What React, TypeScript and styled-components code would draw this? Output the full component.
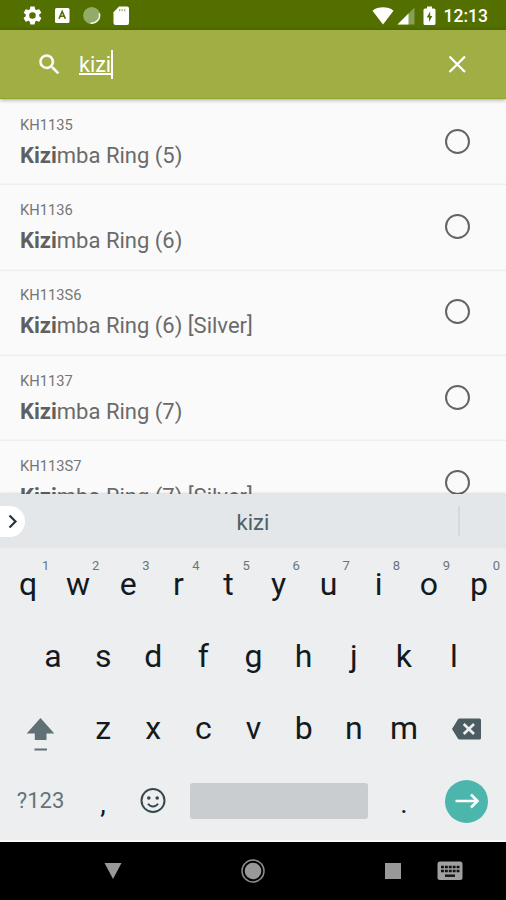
import React from 'react';
import styled, { createGlobalStyle } from 'styled-components';

const GlobalStyle = createGlobalStyle`
  body { margin: 0; background: #000; }
  * { box-sizing: border-box; }
`;

const Screen = styled.div`
  width: 506px;
  height: 900px;
  display: flex;
  flex-direction: column;
  overflow: hidden;
  font-family: Roboto, 'Liberation Sans', sans-serif;
  background: #fafafa;
`;

const StatusBar = styled.header`
  height: 30px;
  flex: none;
  display: flex;
  align-items: center;
  justify-content: space-between;
  padding: 1px 18px 0 22px;
  background: #526f00;
  color: #fff;
`;

const StatusGroup = styled.div<{ $gap: number }>`
  display: flex;
  align-items: center;
  gap: ${(p) => p.$gap}px;
`;

const Clock = styled.span`
  font-size: 17.5px;
  font-weight: 500;
  line-height: 28px;
`;

const SearchBar = styled.div`
  height: 69px;
  flex: none;
  display: flex;
  align-items: center;
  padding: 0 37px 0 36px;
  background: #a0ae44;
  border-bottom: 1px solid #93a42c;
  box-shadow: 0 1px 4px rgba(0, 0, 0, 0.35);
  z-index: 1;
  color: #fff;
`;

const Query = styled.div`
  display: flex;
  align-items: center;
  flex: 1;
  margin-left: 16px;
`;

const QueryText = styled.span`
  font-size: 21.5px;
  line-height: 28px;
  height: 26px;
  text-decoration: underline;
  text-decoration-thickness: 2px;
  text-underline-offset: 1px;
  text-decoration-skip-ink: none;
`;

const Caret = styled.span`
  width: 2px;
  height: 29px;
  background: #fff;
`;

const List = styled.main`
  height: 395px;
  flex: none;
  overflow: hidden;
`;

const Row = styled.div`
  height: 85.3px;
  display: flex;
  justify-content: space-between;
  align-items: center;
  padding: 0 36.5px 0 20px;
  box-shadow: 0 1px 0 #eee, 0 -1px 0 #f5f5f5;
`;

const RowText = styled.div`
  display: flex;
  flex-direction: column;
  gap: 9px;
  padding-top: 1px;
`;

const Code = styled.span`
  font-size: 14.7px;
  line-height: 18px;
  color: #757575;
`;

const Title = styled.span`
  font-size: 22px;
  line-height: 26px;
  color: #6a6a6a;
  white-space: nowrap;

  b { font-weight: 700; color: #606060; }
`;

const Radio = styled.span`
  width: 25px;
  height: 25px;
  margin-bottom: 1px;
  border: 2px solid #646464;
  border-radius: 50%;
`;

const Suggestions = styled.div`
  height: 54px;
  flex: none;
  display: grid;
  grid-template-columns: 46px 1fr 46px;
  align-items: center;
  background: #e4e7e9;
  box-shadow: 0 -1px 2px rgba(0, 0, 0, 0.12);
  z-index: 1;
`;

const Expand = styled.div`
  width: 25px;
  height: 31px;
  border-radius: 0 16px 16px 0;
  background: #fff;
  display: flex;
  align-items: center;
  padding-left: 7px;
`;

const Suggestion = styled.div`
  height: 30px;
  line-height: 33px;
  padding-left: 2px;
  text-align: center;
  font-size: 22px;
  color: #4e6068;
  border-right: 2px solid #d2dadc;
`;

const Keyboard = styled.div`
  height: 294px;
  flex: none;
  display: flex;
  flex-direction: column;
  background: #eceef0;
  border-bottom: 2px solid #fafafa;
`;

const KeyRow = styled.div<{ $inset?: number; $drop?: number }>`
  height: 72.1px;
  display: flex;
  padding: ${(p) => p.$drop ?? 0}px 2px 0 3px;
  margin: 0 ${(p) => p.$inset ?? 0}px;
`;

const Key = styled.div<{ $w?: number }>`
  position: relative;
  flex: ${(p) => (p.$w ? `0 0 ${p.$w}px` : '1 1 0')};
  display: flex;
  justify-content: center;
  align-items: center;
  font-size: 32px;
  line-height: 72px;
  color: #131a1d;
`;

const Hint = styled.span`
  position: absolute;
  left: 39px;
  top: 10px;
  font-size: 13px;
  line-height: 16px;
  color: #6b7579;
`;

const SymbolsLabel = styled.span`
  font-size: 22px;
  line-height: 26px;
  color: #63737a;
`;

const Punctuation = styled.span`
  font-size: 28px;
  line-height: 34px;
  padding-top: 5px;
`;

const SpaceBar = styled.div`
  width: 178px;
  height: 36px;
  border-radius: 3px;
  background: #c9cdd0;
`;

const Enter = styled.div`
  width: 43px;
  height: 43px;
  border-radius: 50%;
  background: #4db6ac;
  display: flex;
  align-items: center;
  justify-content: center;
`;

const NavBar = styled.nav`
  height: 58px;
  flex: none;
  display: grid;
  grid-template-columns: 183px 140px 98px 85px;
  align-items: center;
  background: #000;
`;

const NavSlot = styled.div<{ $left: number }>`
  display: flex;
  align-items: center;
  padding-left: ${(p) => p.$left}px;
`;

const products = [
  ['KH1135', 'mba Ring (5)'],
  ['KH1136', 'mba Ring (6)'],
  ['KH113S6', 'mba Ring (6) [Silver]'],
  ['KH1137', 'mba Ring (7)'],
  ['KH113S7', 'mba Ring (7) [Silver]'],
];

const StatusIcons = () => (
  <svg width="110" height="24" viewBox="0 0 110 24" fill="#fff">
    <path transform="translate(-.8 .2) scale(.94)" d="M19.14 12.94c.04-.3.06-.61.06-.94s-.02-.64-.07-.94l2.03-1.58a.49.49 0 0 0 .12-.61l-1.92-3.32a.49.49 0 0 0-.59-.22l-2.39.96a7 7 0 0 0-1.62-.94l-.36-2.54a.48.48 0 0 0-.48-.41h-3.84a.48.48 0 0 0-.47.41l-.36 2.54c-.59.24-1.13.57-1.62.94l-2.39-.96a.48.48 0 0 0-.59.22L2.74 8.87a.48.48 0 0 0 .12.61l2.03 1.58a6 6 0 0 0-.02 1.88l-2.03 1.58a.49.49 0 0 0-.12.61l1.92 3.32c.12.22.37.29.59.22l2.39-.96c.5.38 1.03.7 1.62.94l.36 2.54c.05.24.24.41.48.41h3.84c.24 0 .44-.17.47-.41l.36-2.54a7 7 0 0 0 1.62-.94l2.39.96c.22.08.47 0 .59-.22l1.92-3.32a.48.48 0 0 0-.12-.61zM12 15.5a3.5 3.5 0 1 1 0-7 3.5 3.5 0 0 1 0 7z" />
    <rect x="33" y="4" width="14.5" height="15" rx="1.5" />
    <path d="M37 14.7 40.2 7.5l3.2 7.2M38.2 12.3h4" fill="none" stroke="#526f00" strokeWidth="1.6" />
    <circle cx="69.7" cy="11.5" r="8.6" fill="#91ab68" />
    <path d="M77.3 9.2A8 8 0 0 1 68.5 19.2" fill="none" stroke="#f4f8ea" strokeWidth="1.5" />
    <path d="M97 2.500h8a2 2 0 0 1 2 2V19a2 2 0 0 1-2 2H93.500a2 2 0 0 1-2-2V8.200z" />
    <path d="M97.700 5v2.200M100.200 5v2.200M102.700 5v2.200" stroke="#94a570" strokeWidth="1.1" />
  </svg>
);

const Wifi = () => (
  <svg width="22" height="20" viewBox="0 0 22 20" fill="#fff">
    <path d="M.5 4.700C3.500 2.300 7 1.300 11 1.300s7.500 1 10.500 3.400L11 18.500z" />
  </svg>
);

const Signal = () => (
  <svg width="18" height="18" viewBox="0 0 18 18">
    <path d="M17.500.5v17H.5z" fill="#86a052" />
    <path d="M11.500 6.500v11H.5z" fill="#fff" />
  </svg>
);

const Battery = () => (
  <svg width="13" height="20" viewBox="0 0 13 20">
    <path d="M4 .5h5v2h2A1.500 1.500 0 0 1 12.500 4v13.500A1.500 1.500 0 0 1 11 19H2a1.500 1.500 0 0 1-1.500-1.500V4A1.500 1.500 0 0 1 2 2.500h2z" fill="#fff" />
    <path d="M7.200 5.500 3.700 11.500h2.300v4.400l3.400-6H7.200z" fill="#526f00" />
  </svg>
);

const SearchIcon = () => (
  <svg width="27" height="27" viewBox="0 0 24 24" fill="#fff">
    <path stroke="#fff" strokeWidth=".3" d="M15.500 14h-.79l-.28-.27A6.470 6.470 0 0 0 16 9.500 6.500 6.500 0 1 0 9.500 16c1.610 0 3.090-.59 4.230-1.570l.27.28v.79l5 4.990L20.490 19l-4.990-5zm-6 0C7.010 14 5 11.990 5 9.500S7.010 5 9.500 5 14 7.010 14 9.500 11.990 14 9.500 14z" />
  </svg>
);

const CloseIcon = () => (
  <svg width="24" height="24" viewBox="0 0 24 24" stroke="#fff" strokeWidth="2.3">
    <path d="m4.500 4.500 15.500 15.500M20 4.500 4.500 20" />
  </svg>
);

const ShiftIcon = () => (
  <svg width="30" height="48" viewBox="0 0 30 48" fill="#607075">
    <path d="M14.500 14 28.300 29.500h-7.800V36H8.800v-6.500H.7z" />
    <path d="M8.500 44.500H21v2H8.500z" />
  </svg>
);

const BackspaceIcon = () => (
  <svg width="30" height="26" viewBox="0 0 30 26">
    <path d="M8.500 3.500h20A1.500 1.500 0 0 1 30 5v18a1.500 1.500 0 0 1-1.500 1.500h-20a2 2 0 0 1-1.500-.8L1 14l6-9.700a2 2 0 0 1 1.500-.8z" fill="#4b5c63" />
    <path d="m12.700 9 10.300 10M23 9 12.700 19" stroke="#eceff1" strokeWidth="2.6" />
  </svg>
);

const SmileIcon = () => (
  <svg width="26" height="26" viewBox="0 0 26 26" fill="none" stroke="#36474f" strokeWidth="2">
    <circle cx="13" cy="12.500" r="11.500" />
    <circle cx="8.800" cy="10" r="1.800" fill="#36474f" stroke="none" />
    <circle cx="17.200" cy="10" r="1.800" fill="#36474f" stroke="none" />
    <path d="M8 15.700c2.500 3.600 7.500 3.600 10 0" />
  </svg>
);

const KeyboardIcon = () => (
  <svg width="26" height="20" viewBox="0 0 26 20">
    <rect x=".5" y=".5" width="25" height="18.500" rx="2.500" fill="#a0a0a0" />
    <path d="M4 6h18.500M4 10h18.500" stroke="#111" strokeWidth="2.6" strokeDasharray="2.9 1" />
    <path d="M8 14.700h10" stroke="#111" strokeWidth="2.4" />
  </svg>
);

const rowOne = 'qwertyuiop'.split('');
const rowTwo = 'asdfghjkl'.split('');
const rowThree = 'zxcvbnm'.split('');

export default function App() {
  return (
    <Screen>
      <GlobalStyle />
      <StatusBar>
        <StatusIcons />
        <StatusGroup $gap={8}>
          <StatusGroup $gap={3}>
            <Wifi />
            <Signal />
          </StatusGroup>
          <Battery />
          <Clock>12:13</Clock>
        </StatusGroup>
      </StatusBar>
      <SearchBar>
        <SearchIcon />
        <Query>
          <QueryText>kizi</QueryText>
          <Caret />
        </Query>
        <CloseIcon />
      </SearchBar>
      <List>
        {products.map(([code, rest]) => (
          <Row key={code}>
            <RowText>
              <Code>{code}</Code>
              <Title><b>Kizi</b>{rest}</Title>
            </RowText>
            <Radio />
          </Row>
        ))}
      </List>
      <Suggestions>
        <Expand>
          <svg width="12" height="16" viewBox="0 0 12 16" fill="none" stroke="#26363c" strokeWidth="2.2">
            <path d="m2.500 2.500 6 6-6 6" />
          </svg>
        </Expand>
        <Suggestion>kizi</Suggestion>
      </Suggestions>
      <Keyboard>
        <KeyRow>
          {rowOne.map((k, i) => (
            <Key key={k}>{k}<Hint>{(i + 1) % 10}</Hint></Key>
          ))}
        </KeyRow>
        <KeyRow $inset={25}>
          {rowTwo.map((k) => <Key key={k}>{k}</Key>)}
        </KeyRow>
        <KeyRow>
          <Key $w={75}><ShiftIcon /></Key>
          {rowThree.map((k) => <Key key={k}>{k}</Key>)}
          <Key $w={75}><BackspaceIcon /></Key>
        </KeyRow>
        <KeyRow $drop={1.5}>
          <Key $w={75}><SymbolsLabel>?123</SymbolsLabel></Key>
          <Key $w={50}><Punctuation>,</Punctuation></Key>
          <Key $w={50}><SmileIcon /></Key>
          <Key $w={201}><SpaceBar /></Key>
          <Key $w={50}><Punctuation>.</Punctuation></Key>
          <Key $w={75}>
            <Enter>
              <svg width="26" height="16" viewBox="0 0 26 16" fill="none" stroke="#fff" strokeWidth="2.5">
                <path d="M1.500 8h22M17 1.500 23.500 8 17 14.500" />
              </svg>
            </Enter>
          </Key>
        </KeyRow>
      </Keyboard>
      <NavBar>
        <NavSlot $left={104}>
          <svg width="18" height="18" viewBox="0 0 18 18"><path d="M.5 1h17L9 17z" fill="#999" /></svg>
        </NavSlot>
        <NavSlot $left={58}>
          <svg width="24" height="24" viewBox="0 0 24 24">
            <circle cx="12" cy="12" r="11" fill="none" stroke="#8c8c8c" strokeWidth="1.5" />
            <circle cx="12" cy="12" r="8.300" fill="#999" />
          </svg>
        </NavSlot>
        <NavSlot $left={62}>
          <svg width="16" height="16" viewBox="0 0 16 16"><path d="M0 0h16v16H0z" fill="#999" /></svg>
        </NavSlot>
        <NavSlot $left={16}><KeyboardIcon /></NavSlot>
      </NavBar>
    </Screen>
  );
}
